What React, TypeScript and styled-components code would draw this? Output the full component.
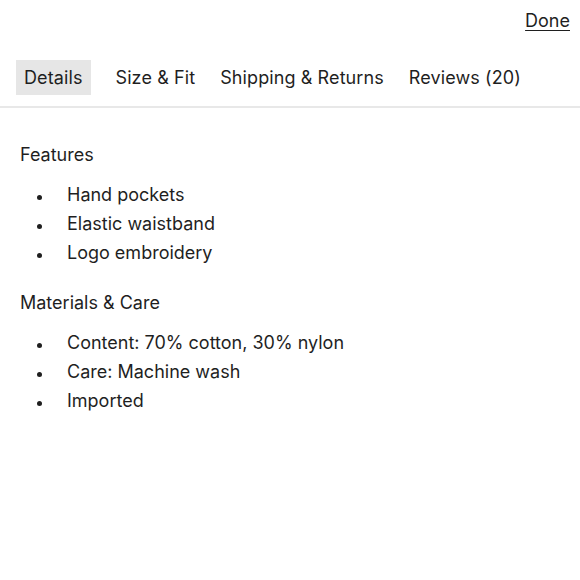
import React from "react";
import styled, { createGlobalStyle } from "styled-components";

const Global = createGlobalStyle`
  html, body { margin: 0; padding: 0; background: #fff; }
  body { font-family: "Inter", "Noto Sans", sans-serif; color: #1f1f1f; }
`;

const Page = styled.div`
  width: 580px;
  height: 580px;
  display: flex;
  flex-direction: column;
`;

const TopBar = styled.div`
  display: flex;
  justify-content: flex-end;
  padding: 9px 10px 0 0;
  height: 51px;
  box-sizing: border-box;
`;

const DoneLink = styled.a`
  font-size: 18px;
  color: #1f1f1f;
  text-decoration: underline;
  text-underline-offset: 3px;
  text-decoration-thickness: 1px;
  cursor: pointer;
  line-height: 24px;
`;

const Tabs = styled.div`
  display: flex;
  align-items: center;
  gap: 13px;
  padding: 9px 16px 11px;
  border-bottom: 2px solid #e8e8e8;
`;

const Tab = styled.button<{ $active?: boolean }>`
  font-family: inherit;
  font-size: 18px;
  letter-spacing: 0.1px;
  color: #1f1f1f;
  border: none;
  background: ${(p) => (p.$active ? "#e6e6e6" : "transparent")};
  padding: 0 ${(p) => (p.$active ? "8px" : "6px")};
  height: 35px;
  margin-right: ${(p) => (p.$active ? "6px" : "0")};
  cursor: pointer;
`;

const Content = styled.div`
  padding: 35px 20px 0;
`;

const Heading = styled.h3`
  margin: 0;
  font-size: 18px;
  font-weight: 400;
  line-height: 24px;
`;

const List = styled.ul`
  margin: 13px 0 24px;
  padding: 0 0 0 47px;
  list-style: none;
`;

const Item = styled.li`
  position: relative;
  font-size: 18px;
  line-height: 29px;
  &::before {
    content: "";
    position: absolute;
    left: -30px;
    top: 15px;
    width: 5px;
    height: 5px;
    border-radius: 50%;
    background: #1f1f1f;
  }
`;

const sections = [
  { title: "Features", items: ["Hand pockets", "Elastic waistband", "Logo embroidery"] },
  { title: "Materials & Care", items: ["Content: 70% cotton, 30% nylon", "Care: Machine wash", "Imported"] },
];

export default function App() {
  return (
    <Page>
      <Global />
      <TopBar>
        <DoneLink>Done</DoneLink>
      </TopBar>
      <Tabs>
        <Tab $active>Details</Tab>
        <Tab>Size &amp; Fit</Tab>
        <Tab>Shipping &amp; Returns</Tab>
        <Tab>Reviews (20)</Tab>
      </Tabs>
      <Content>
        {sections.map((s) => (
          <div key={s.title}>
            <Heading>{s.title}</Heading>
            <List>
              {s.items.map((i) => (
                <Item key={i}>{i}</Item>
              ))}
            </List>
          </div>
        ))}
      </Content>
    </Page>
  );
}
